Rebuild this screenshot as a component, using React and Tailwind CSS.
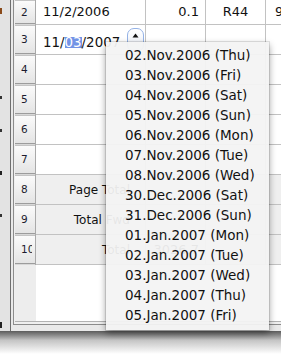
import React from "react";

const rows = [
  { n: "2", first: true, c1: "11/2/2006", c2: "0.1", c3: "R44", c4: "9" },
  { n: "3", edit: true },
  { n: "4" },
  { n: "5" },
  { n: "6" },
  { n: "7" },
  { n: "8", label: "Page Total", gray: true },
  { n: "9", label: "Total Fwd", gray: true },
  { n: "10", label: "Total", gray: true, c2: "3026.7" },
];

const menu = [
  "02.Nov.2006 (Thu)",
  "03.Nov.2006 (Fri)",
  "04.Nov.2006 (Sat)",
  "05.Nov.2006 (Sun)",
  "06.Nov.2006 (Mon)",
  "07.Nov.2006 (Tue)",
  "08.Nov.2006 (Wed)",
  "30.Dec.2006 (Sat)",
  "31.Dec.2006 (Sun)",
  "01.Jan.2007 (Mon)",
  "02.Jan.2007 (Tue)",
  "03.Jan.2007 (Wed)",
  "04.Jan.2007 (Thu)",
  "05.Jan.2007 (Fri)",
];

function Header({ n }) {
  return (
    <div className="w-[21px] shrink-0 flex flex-col border-r border-[#a9a9a9] bg-[#d4d4d4]">
      <div className="h-[1px] bg-[#c4c4c4]" />
      <div className="flex-1 flex items-center bg-gradient-to-b from-[#fbfbfb] to-[#e4e4e4] border-b border-[#9c9c9c]">
        <div className="ml-[6px] w-[11px] overflow-hidden whitespace-nowrap text-[10.5px] leading-none text-[#1c1c2e]">
          {n}
        </div>
      </div>
      <div className="h-[1px] bg-[#d8d8d8]" />
    </div>
  );
}

function Row({ r }) {
  const h = r.first ? "h-[25px]" : "h-[30px]";
  const bg = r.gray ? "bg-[#efefef]" : "bg-white";
  const cell = `border-b border-r border-[#c2c2c2] ${bg}`;
  return (
    <div className={`flex ${h} shrink-0`}>
      <Header n={r.n} />
      <div className={`w-[110px] shrink-0 flex ${cell} ${r.first ? "items-end pb-[6px]" : "items-center"}`}>
        {r.c1 && <span className="pl-[7px] text-[13px] leading-none text-[#111]">{r.c1}</span>}
        {r.label && (
          <span className="ml-auto pr-[15px] text-[12px] leading-none text-[#111] whitespace-nowrap">
            {r.label}
          </span>
        )}
        {r.edit && (
          <div className="flex w-full h-full items-start">
            <div className="flex items-baseline pl-[7px] mt-[10px] text-[13.4px] leading-[16px] text-[#111]">
              <span>11/</span>
              <span className="block h-[11px] leading-[11px] bg-[#7394e6] text-white">03</span>
              <span>/2007</span>
            </div>
            <div className="ml-auto mr-[1px] mt-[3px] w-[17px] h-[24px] rounded-[7px] border border-[#94b2e6] bg-gradient-to-b from-white to-[#e9eef7] flex justify-center">
              <svg width="7" height="5" viewBox="0 0 7 5" className="mt-[4px]">
                <path d="M3.5 0.5 L6.5 4.5 L0.5 4.5 Z" fill="#111" />
              </svg>
            </div>
          </div>
        )}
      </div>
      <div className={`w-[60px] shrink-0 flex ${cell} ${r.first ? "items-end pb-[6px]" : "items-center"}`}>
        {r.c2 && <span className="ml-auto pr-[6px] text-[13px] leading-none text-[#111]">{r.c2}</span>}
      </div>
      <div className={`w-[60px] shrink-0 flex justify-center ${cell} ${r.first ? "items-end pb-[6px]" : "items-center"}`}>
        {r.c3 && <span className="text-[13px] leading-none text-[#111]">{r.c3}</span>}
      </div>
      <div className={`flex-1 flex border-b border-[#c2c2c2] ${bg} ${r.first ? "items-end pb-[6px]" : "items-center"} overflow-hidden`}>
        {r.c4 && <span className="pl-[9px] text-[13px] leading-none text-[#111]">{r.c4}</span>}
      </div>
    </div>
  );
}

export default function App() {
  return (
    <div className="relative w-[281px] h-[354px] overflow-hidden bg-white font-['DejaVu_Sans']">
      <div className="flex h-[331px]">
        <div className="relative w-[10px] shrink-0 bg-[#e3e3e3]">
          <div className="absolute left-0 top-[8px] w-[2px] h-[6px] bg-[#8a4a1a]" />
          <div className="absolute left-0 top-[96px] w-[2px] h-[3px] bg-[#333]" />
          <div className="absolute left-0 top-[129px] w-[2px] h-[3px] bg-[#333]" />
          <div className="absolute left-0 top-[171px] w-[2px] h-[4px] bg-[#222]" />
          <div className="absolute left-0 top-[214px] w-[2px] h-[3px] bg-[#333]" />
          <div className="absolute left-0 top-[322px] w-[2px] h-[6px] bg-[#222]" />
        </div>
        <div className="flex-1 flex flex-col border-l border-[#6f6f6f] bg-[#e9e9e9] pl-[2px] pb-[6px]">
          <div className="flex-1 flex flex-col border-l border-b border-[#8c8c8c] bg-[#efefef] pl-[1px] pb-[2px]">
            <div className="flex-1 flex flex-col border-b border-[#b2b2b2] bg-white">
              {rows.map((r) => (
                <Row key={r.n} r={r} />
              ))}
              <div className="flex-1 flex">
                <div className="w-[21px] bg-[#ededed]" />
                <div className="flex-1 bg-white" />
              </div>
            </div>
          </div>
        </div>
      </div>
      <div className="h-[23px] bg-gradient-to-b from-[#5c5c5c] via-[#c4c4c4] via-40% to-white" />

      <div className="absolute left-[106px] top-[42px] w-[163px] h-[288px] bg-[#f3f3f3]/[0.94] shadow-[0_3px_7px_rgba(0,0,0,0.4)] ring-1 ring-black/10 pt-[3px]">
        {menu.map((m) => (
          <div key={m} className="h-[20px] leading-[20px] pl-[19px] text-[13.5px] text-[#111] whitespace-nowrap">
            {m}
          </div>
        ))}
      </div>
    </div>
  );
}
